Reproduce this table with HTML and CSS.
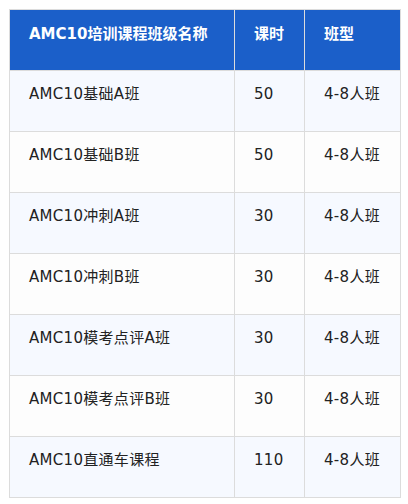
FILE: index.html
```html
<!DOCTYPE html>
<html lang="zh">
<head>
<meta charset="utf-8">
<link rel="stylesheet" href="styles.css">
</head>
<body>
<table class="course-table">
  <thead>
    <tr>
      <th class="col-name">AMC10培训课程班级名称</th>
      <th class="col-hours">课时</th>
      <th class="col-type">班型</th>
    </tr>
  </thead>
  <tbody>
    <tr><td>AMC10基础A班</td><td>50</td><td>4-8人班</td></tr>
    <tr><td>AMC10基础B班</td><td>50</td><td>4-8人班</td></tr>
    <tr><td>AMC10冲刺A班</td><td>30</td><td>4-8人班</td></tr>
    <tr><td>AMC10冲刺B班</td><td>30</td><td>4-8人班</td></tr>
    <tr><td>AMC10模考点评A班</td><td>30</td><td>4-8人班</td></tr>
    <tr><td>AMC10模考点评B班</td><td>30</td><td>4-8人班</td></tr>
    <tr><td>AMC10直通车课程</td><td>110</td><td>4-8人班</td></tr>
  </tbody>
</table>
</body>
</html>
```
FILE: styles.css
```css
html, body {
  margin: 0;
  padding: 0;
  background: #ffffff;
}
body {
  padding: 9px 0 0 9px;
  font-family: "DejaVu Sans", "Noto Sans CJK SC", sans-serif;
}
.course-table {
  border-collapse: collapse;
  table-layout: fixed;
  width: 392px;
}
.col-name { width: 225px; }
.col-hours { width: 70px; }
.course-table th,
.course-table td {
  border: 1px solid #dcdcdc;
  height: 61px;
  box-sizing: border-box;
  padding: 11px 19px 0 19px;
  vertical-align: top;
  text-align: left;
  font-size: 15px;
  line-height: 24px;
  white-space: nowrap;
}
.course-table th {
  background: #1b5fc9;
  color: #ffffff;
  font-weight: 700;
  padding-top: 12px;
}
.course-table td {
  color: #222222;
  letter-spacing: 0.3px;
}
.course-table tbody tr:nth-child(odd) td {
  background: #f6f9ff;
}
.course-table tbody tr:nth-child(even) td {
  background: #fdfdfd;
}
```
